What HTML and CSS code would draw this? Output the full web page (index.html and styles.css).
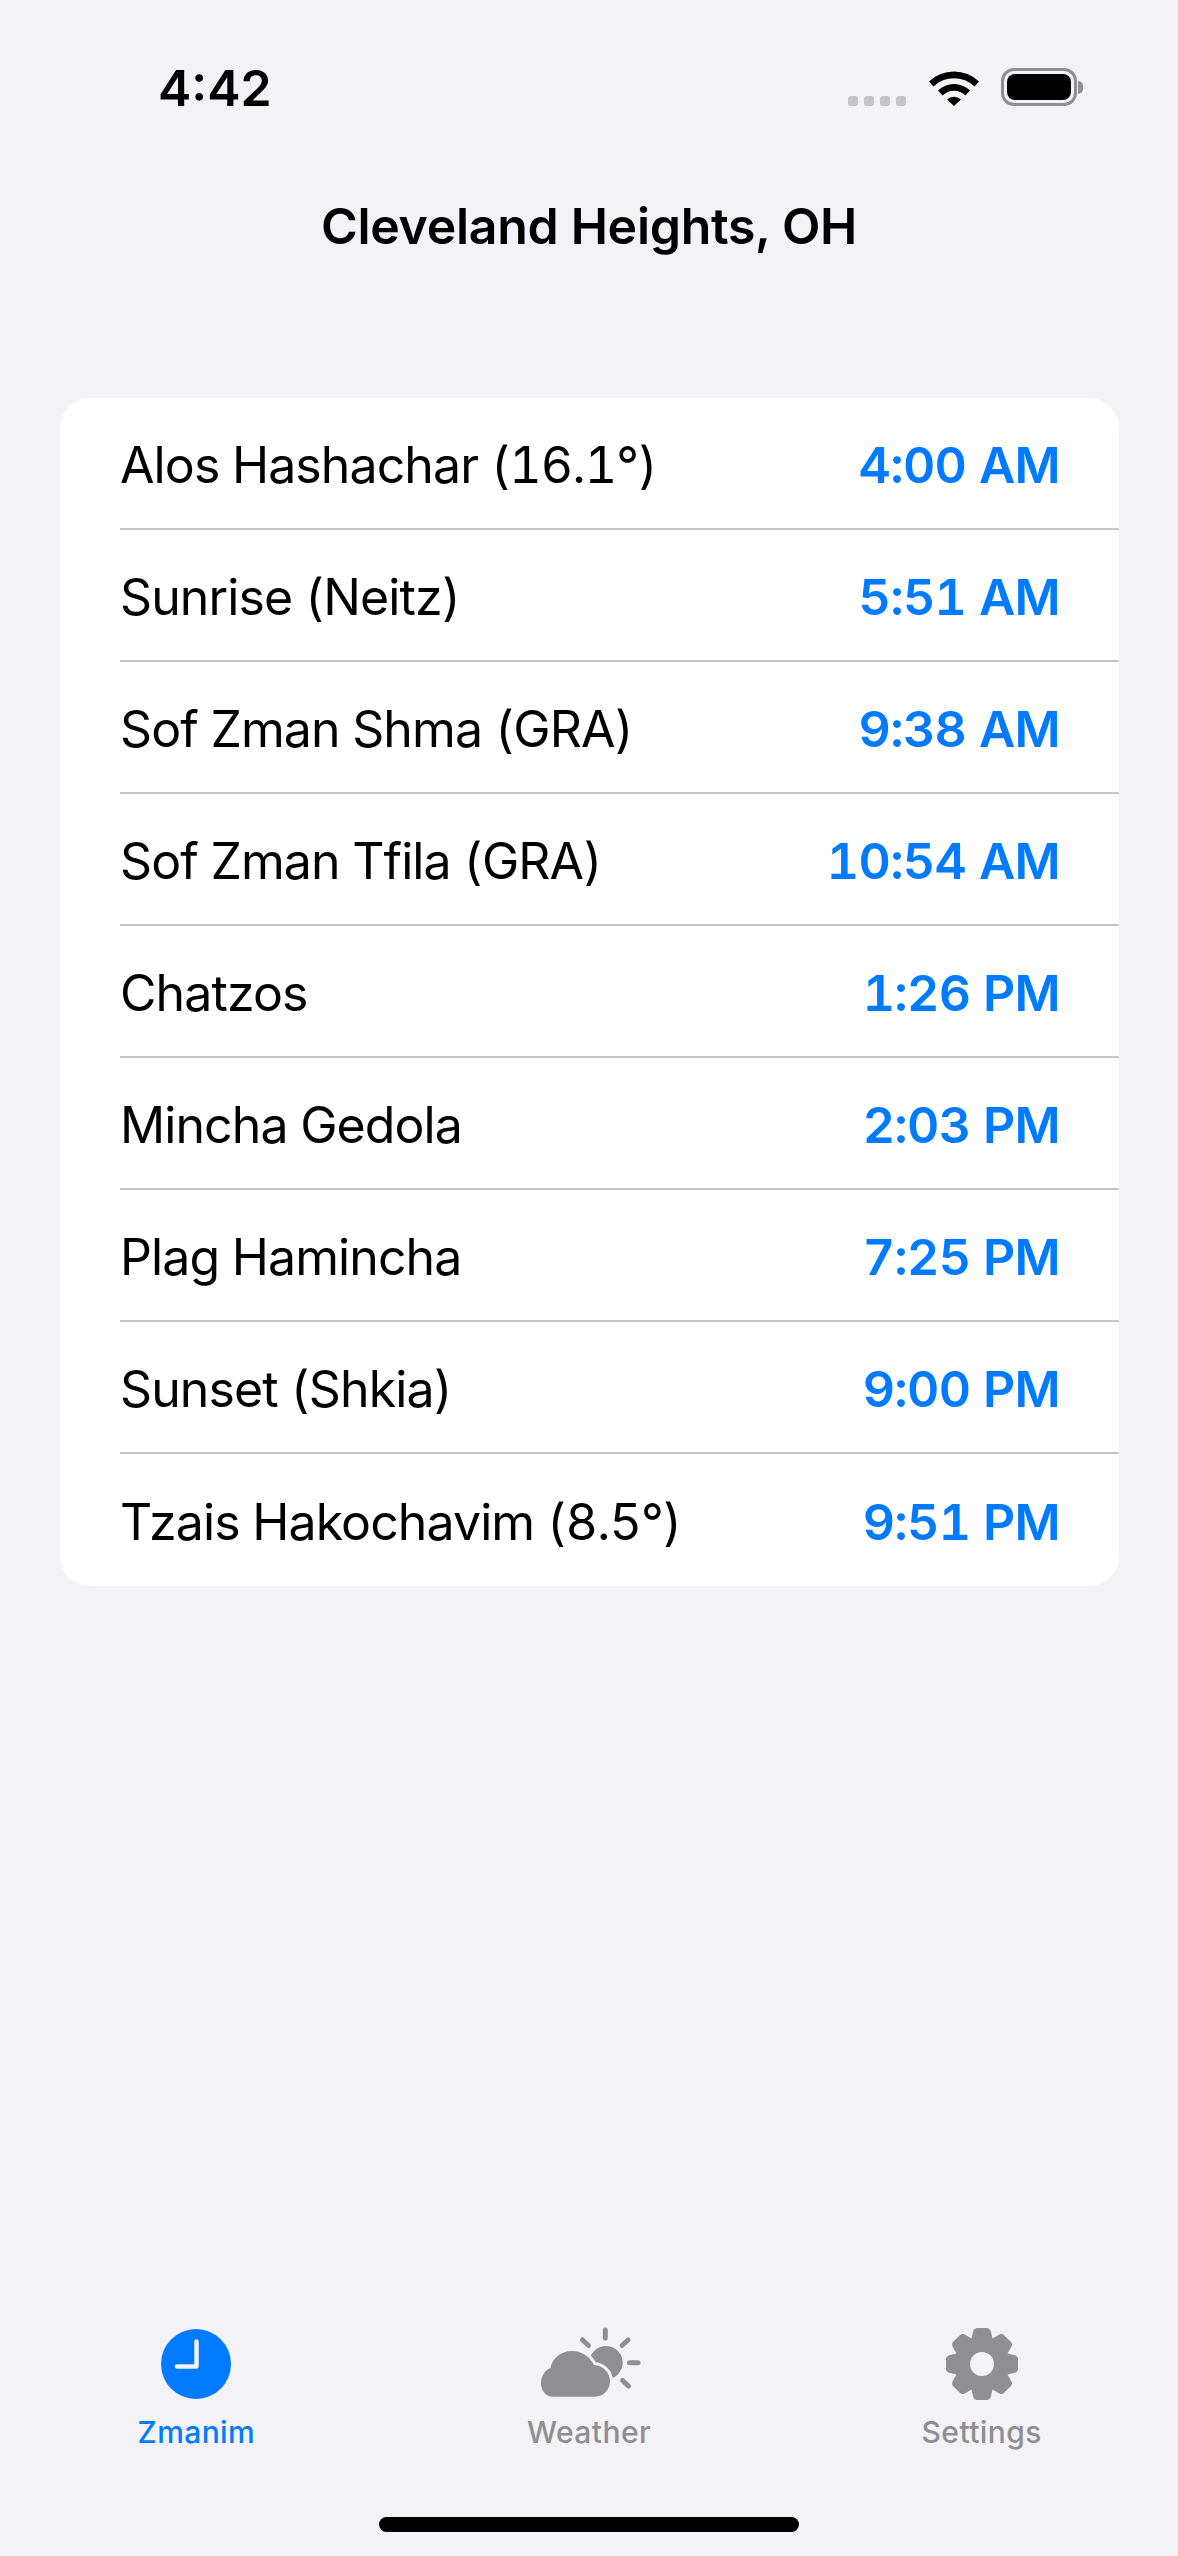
FILE: index.html
```html
<!DOCTYPE html>
<html lang="en">
<head>
    <meta charset="UTF-8">
    <meta name="viewport" content="width=device-width, initial-scale=1.0">
    <title>Zmanim</title>
    <link rel="stylesheet" href="styles.css">
</head>
<body>
    <div class="screen">
        <div class="status-bar">
            <span class="clock-time">4:42</span>
            <div class="status-icons">
                <div class="signal"><i></i><i></i><i></i><i></i></div>
                <svg class="wifi" width="50" height="38" viewBox="0 0 50 38">
                    <path d="M0 13.5 A36 36 0 0 1 50 13.5 L45.5 18.5 A29.5 29.5 0 0 0 4.5 18.5 Z" fill="#000"/>
                    <path d="M9 22.5 A23 23 0 0 1 41 22.5 L36.5 27.5 A16.5 16.5 0 0 0 13.5 27.5 Z" fill="#000"/>
                    <path d="M18 31.5 A10 10 0 0 1 32 31.5 L25 38 Z" fill="#000"/>
                </svg>
                <div class="battery"><div class="battery-fill"></div></div>
                <div class="battery-cap"></div>
            </div>
        </div>

        <h1 class="location">Cleveland Heights, OH</h1>

        <div class="card">
            <div class="row"><span class="row-name">Alos Hashachar (16.1°)</span><span class="row-time">4:00 AM</span></div>
            <div class="row"><span class="row-name">Sunrise (Neitz)</span><span class="row-time">5:51 AM</span></div>
            <div class="row"><span class="row-name">Sof Zman Shma (GRA)</span><span class="row-time">9:38 AM</span></div>
            <div class="row"><span class="row-name">Sof Zman Tfila (GRA)</span><span class="row-time">10:54 AM</span></div>
            <div class="row"><span class="row-name">Chatzos</span><span class="row-time">1:26 PM</span></div>
            <div class="row"><span class="row-name">Mincha Gedola</span><span class="row-time">2:03 PM</span></div>
            <div class="row"><span class="row-name">Plag Hamincha</span><span class="row-time">7:25 PM</span></div>
            <div class="row"><span class="row-name">Sunset (Shkia)</span><span class="row-time">9:00 PM</span></div>
            <div class="row"><span class="row-name">Tzais Hakochavim (8.5°)</span><span class="row-time">9:51 PM</span></div>
        </div>

        <div class="tab-bar">
            <div class="tab tab-active">
                <svg class="tab-icon" width="90" height="76" viewBox="0 0 90 76">
                    <circle cx="45" cy="38" r="35" fill="#007aff"/>
                    <path d="M45.5 15.5 V40.5 H26" fill="none" stroke="#f2f2f7" stroke-width="4.5" stroke-linecap="round" stroke-linejoin="round"/>
                </svg>
                <span class="tab-label">Zmanim</span>
            </div>
            <div class="tab">
                <svg class="tab-icon" width="90" height="76" viewBox="0 0 90 76">
                    <g fill="none" stroke="#8e8e93" stroke-width="5" stroke-linecap="round">
                        <path d="M61.3 4 V12"/>
                        <path d="M38.5 14 L44.5 19.5"/>
                        <path d="M84 14 L78 19.5"/>
                        <path d="M85.5 36.7 H94"/>
                        <path d="M78.5 54.5 L84.5 60"/>
                    </g>
                    <circle cx="62" cy="36.7" r="16.7" fill="#8e8e93"/>
                    <path d="M9 70.7 H50.5 C59.5 70.7 66 63.5 66 55 C66 46.5 59 39.5 50 39 C46 31 38 25 28 25 C16 25 8 33 6.5 42 C1 44 -3 50 -3 57 C-3 65 2 70.7 9 70.7 Z" fill="#8e8e93" stroke="#f2f2f7" stroke-width="6" paint-order="stroke"/>
                </svg>
                <span class="tab-label">Weather</span>
            </div>
            <div class="tab">
                <svg class="tab-icon" width="90" height="76" viewBox="0 0 90 76">
                    <defs>
                        <path id="tooth" d="M34 14 L36.5 4.5 Q37.5 2 40 2 H50 Q52.5 2 53.5 4.5 L56 14 Z" fill="#8e8e93"/>
                    </defs>
                    <circle cx="45" cy="38" r="27" fill="#8e8e93"/>
                    <use href="#tooth"/>
                    <use href="#tooth" transform="rotate(45 45 38)"/>
                    <use href="#tooth" transform="rotate(90 45 38)"/>
                    <use href="#tooth" transform="rotate(135 45 38)"/>
                    <use href="#tooth" transform="rotate(180 45 38)"/>
                    <use href="#tooth" transform="rotate(225 45 38)"/>
                    <use href="#tooth" transform="rotate(270 45 38)"/>
                    <use href="#tooth" transform="rotate(315 45 38)"/>
                    <circle cx="45" cy="38" r="12" fill="#f2f2f7"/>
                </svg>
                <span class="tab-label">Settings</span>
            </div>
        </div>

        <div class="home-bar"></div>
    </div>
</body>
</html>
```

FILE: styles.css
```css
* {
    box-sizing: border-box;
}

body {
    margin: 0;
    padding: 0;
    background-color: #f2f2f7;
    color: #000;
    font-family: Inter, 'Liberation Sans', sans-serif;
}

.screen {
    display: flex;
    flex-direction: column;
    height: 2556px;
    overflow: hidden;
}

.status-bar {
    display: flex;
    justify-content: space-between;
    align-items: flex-end;
    height: 106px;
    padding: 0 95px 0 158px;
}

.clock-time {
    font-size: 50px;
    font-weight: 600;
    line-height: 50px;
    margin-bottom: -7px;
}

.status-icons {
    display: flex;
    align-items: flex-end;
}

.signal {
    display: flex;
    gap: 6px;
    margin-right: 23px;
}

.signal i {
    width: 10px;
    height: 10px;
    border-radius: 3px;
    background: #c4c4c8;
}

.wifi {
    display: block;
    margin-right: 22px;
}

.battery {
    width: 76px;
    height: 38px;
    padding: 3px;
    border: 3px solid #8e8e93;
    border-radius: 13px;
}

.battery-fill {
    width: 100%;
    height: 100%;
    background: #000;
    border-radius: 8px;
}

.battery-cap {
    width: 5px;
    height: 13px;
    margin: 0 0 12px 1px;
    background: #8e8e93;
    border-radius: 0 5px 5px 0;
}

.location {
    margin: 0;
    padding-top: 85px;
    height: 292px;
    text-align: center;
    font-size: 50px;
    font-weight: 600;
    letter-spacing: -0.3px;
    line-height: 70px;
}

.card {
    margin: 0 59px 0 60px;
    background: #fff;
    border-radius: 30px;
    overflow: hidden;
}

.row {
    display: flex;
    justify-content: space-between;
    align-items: center;
    height: 132px;
    margin-left: 60px;
    padding: 3px 59px 0 0;
    border-bottom: 2px solid #c6c6c8;
}

.row:last-child {
    border-bottom: none;
}

.row-name {
    font-size: 50px;
    font-weight: 400;
    font-variant-numeric: tabular-nums;
    letter-spacing: -0.9px;
}

.row-time {
    font-size: 50px;
    font-weight: 600;
    font-variant-numeric: tabular-nums;
    letter-spacing: -0.7px;
    color: #007aff;
}

.tab-bar {
    display: grid;
    grid-template-columns: 1fr 1fr 1fr;
    margin-top: auto;
}

.tab {
    display: flex;
    flex-direction: column;
    align-items: center;
    color: #8e8e93;
}

.tab-active {
    color: #007aff;
}

.tab-icon {
    display: block;
    overflow: visible;
}

.tab-label {
    margin-top: 12px;
    font-size: 30px;
    font-weight: 500;
    letter-spacing: 0.4px;
    line-height: 36px;
}

.home-bar {
    width: 420px;
    height: 15px;
    margin: 67px auto 24px;
    background: #000;
    border-radius: 8px;
}
```
